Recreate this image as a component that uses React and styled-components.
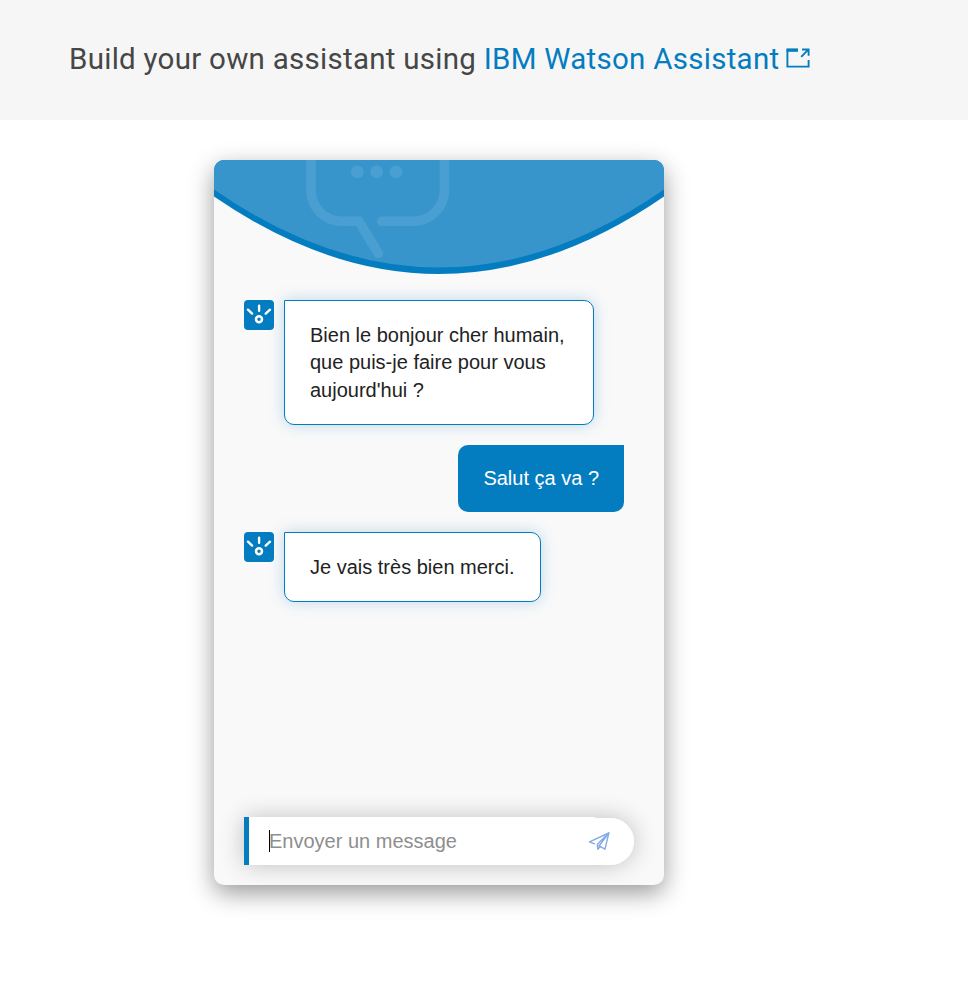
import React from 'react';
import styled, { createGlobalStyle } from 'styled-components';

const GlobalStyle = createGlobalStyle`
  * { box-sizing: border-box; }
  body { margin: 0; background: #fff; font-family: "Liberation Sans", Arial, sans-serif; }
`;

const Page = styled.div`
  min-height: 996px;
`;

const Banner = styled.header`
  display: flex;
  align-items: center;
  height: 120px;
  padding: 0 0 3px 69px;
  background: #f6f6f6;
`;

const BannerTitle = styled.h1`
  display: flex;
  align-items: center;
  margin: 0;
  white-space: pre;
  font: 400 29.5px/40px Roboto, sans-serif;
  letter-spacing: 0.27px;
  color: #464646;
`;

const BannerLink = styled.a`
  display: flex;
  align-items: center;
  color: #047cc0;
  text-decoration: none;
`;

const LaunchIcon = styled.svg`
  width: 24px;
  height: 20px;
  margin: 0 0 1px 7px;
`;

const Card = styled.main`
  display: flex;
  flex-direction: column;
  width: 450px;
  height: 725px;
  margin: 40px 0 0 214px;
  background: #f9f9f9;
  border-radius: 10px;
  box-shadow: 0 8px 25px rgba(0, 0, 0, 0.4);
`;

const CardHeader = styled.svg`
  display: block;
  flex: none;
  width: 450px;
  height: 115px;
  border-radius: 10px 10px 0 0;
`;

const Messages = styled.section`
  flex: 1;
  display: flex;
  flex-direction: column;
  gap: 20px;
  padding: 25px 40px 0 30px;
`;

const MessageRow = styled.div`
  display: flex;
  align-items: flex-start;
  gap: 10px;
  justify-content: ${(p) => (p.$mine ? 'flex-end' : 'flex-start')};
`;

const Avatar = styled.svg`
  flex: none;
  width: 30px;
  height: 30px;
  border-radius: 4px;
  background: #047cc0;
`;

const Bubble = styled.p`
  max-width: 310px;
  margin: 0;
  padding: ${(p) => (p.$mine ? '20px 25px' : '20.5px 25px 19.5px')};
  font-size: 20px;
  line-height: 27.5px;
  color: ${(p) => (p.$mine ? '#fff' : '#222')};
  background: ${(p) => (p.$mine ? '#047cc0' : '#fff')};
  border: ${(p) => (p.$mine ? 'none' : '1px solid #047cc0')};
  border-radius: ${(p) => (p.$mine ? '10px 0 10px 10px' : '0 10px 10px 10px')};
  box-shadow: ${(p) => (p.$mine ? 'none' : '0 0 15px rgba(4, 124, 192, 0.25)')};
`;

const Composer = styled.form`
  display: flex;
  align-items: flex-end;
  height: 47px;
  margin: 0 30px 20px;
  border-radius: 0 24px 24px 0;
  box-shadow: 0 0 25px rgba(0, 0, 0, 0.24);
`;

const Field = styled.div`
  display: flex;
  align-items: center;
  width: 351px;
  height: 48px;
  padding-left: 20px;
  background: #fff;
  border-left: 5px solid #047cc0;
  font-size: 20px;
  color: #8e8e8e;
`;

const Caret = styled.span`
  width: 1px;
  height: 22px;
  margin-right: -1px;
  background: #000;
`;

const SendButton = styled.button`
  flex: 1;
  height: 47px;
  padding: 0;
  border: 0;
  border-radius: 0 24px 24px 0;
  background: #fff;
`;

const SendIcon = styled.svg`
  display: block;
  width: 22px;
  height: 20px;
  margin-left: -7px;
`;

const BotAvatar = () => (
  <Avatar viewBox="0 0 30 30" fill="none" stroke="#fff" strokeWidth="2.4" strokeLinecap="round">
    <circle cx="15" cy="19.3" r="3" strokeWidth="2.5" />
    <path d="M15.1 5.8v4.900M4 9.700l4.100 3.900M26 9.700l-4.300 3.900" />
  </Avatar>
);

const Message = ({ mine, children }) => (
  <MessageRow $mine={mine}>
    {!mine && <BotAvatar />}
    <Bubble $mine={mine}>{children}</Bubble>
  </MessageRow>
);

export default function App() {
  return (
    <Page>
      <GlobalStyle />
      <Banner>
        <BannerTitle>
          {'Build your own assistant using '}
          <BannerLink>
            IBM Watson Assistant
            <LaunchIcon viewBox="0 0 24 20" fill="none" stroke="#047cc0" strokeWidth="1.9">
              <path d="M12 2.5H1.4V18.600H22.600V12M15.200 8.800L22 1.900M16 1.500h6.600v6.300" />
              <path d="M0.500 2h11.500" strokeWidth="3.200" />
            </LaunchIcon>
          </BannerLink>
        </BannerTitle>
      </Banner>
      <Card>
        <CardHeader viewBox="0 0 450 115">
          <path d="M0 0H450V36.5Q225 191.5 0 36.5Z" fill="#047cc0" />
          <path d="M0 0H450V29.5Q225 185.5 0 29.5Z" fill="#3795cc" />
          <g fill="none" stroke="#4a9fd2" strokeWidth="9.6" strokeLinecap="round">
            <path d="M97 -6V30A31 31 0 0 0 128 61.300H144.800L164.300 93.500" />
            <path d="M167.800 61.300H199A31.500 31.300 0 0 0 230.500 30V-6" />
          </g>
          <g fill="#4a9fd2">
            <circle cx="143.400" cy="11.800" r="6.400" />
            <circle cx="162.700" cy="11.800" r="6.400" />
            <circle cx="182" cy="11.800" r="6.400" />
          </g>
        </CardHeader>
        <Messages>
          <Message>Bien le bonjour cher humain, que puis-je faire pour vous aujourd'hui ?</Message>
          <Message mine>Salut ça va ?</Message>
          <Message>Je vais très bien merci.</Message>
        </Messages>
        <Composer>
          <Field><Caret />Envoyer un message</Field>
          <SendButton type="button" aria-label="Envoyer">
            <SendIcon viewBox="0 0 22 20" fill="none" stroke="#85a9e6" strokeWidth="1.400" strokeLinejoin="round" strokeLinecap="round">
              <path d="M6.500 11.800L1.500 9.800L20.800 1L17 17.200L11.500 14.200" />
              <path d="M20.800 1L9.400 12.200L9.700 17.200L12.500 14.600M20.800 1L11 14" />
            </SendIcon>
          </SendButton>
        </Composer>
      </Card>
    </Page>
  );
}
